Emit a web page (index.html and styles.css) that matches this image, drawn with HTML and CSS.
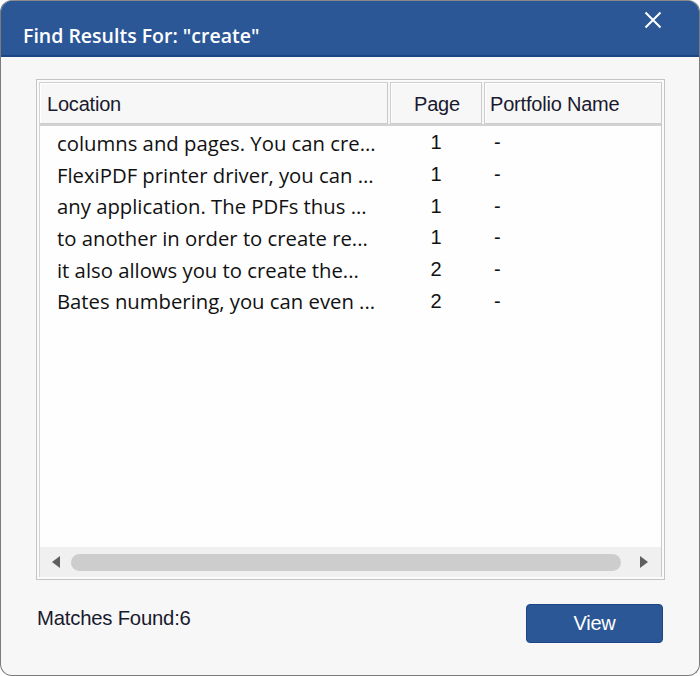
FILE: index.html
```html
<!DOCTYPE html>
<html>
<head>
<meta charset="utf-8">
<link rel="stylesheet" href="styles.css">
</head>
<body>
<div class="window">
  <div class="titlebar">
    <span class="title">Find Results For: "create"</span>
    <svg class="close" width="18" height="18" viewBox="0 0 18 18"><path d="M1.5 1.5L16.5 16.5M16.5 1.5L1.5 16.5" stroke="#fff" stroke-width="2" fill="none"/></svg>
  </div>
  <div class="content">
    <div class="list">
      <div class="grid">
        <div class="head">
          <div class="hcell c1">Location</div>
          <div class="hcell c2">Page</div>
          <div class="hcell c3">Portfolio Name</div>
        </div>
        <div class="rows">
          <div class="row"><span class="c1 loc">columns and pages. You can cre...</span><span class="c2 pg">1</span><span class="c3 pf">-</span></div>
          <div class="row"><span class="c1 loc">FlexiPDF printer driver, you can ...</span><span class="c2 pg">1</span><span class="c3 pf">-</span></div>
          <div class="row"><span class="c1 loc">any application. The PDFs thus ...</span><span class="c2 pg">1</span><span class="c3 pf">-</span></div>
          <div class="row"><span class="c1 loc">to another in order to create re...</span><span class="c2 pg">1</span><span class="c3 pf">-</span></div>
          <div class="row"><span class="c1 loc">it also allows you to create the...</span><span class="c2 pg">2</span><span class="c3 pf">-</span></div>
          <div class="row"><span class="c1 loc">Bates numbering, you can even ...</span><span class="c2 pg">2</span><span class="c3 pf">-</span></div>
        </div>
        <div class="hscroll">
          <span class="arrow left"></span>
          <span class="thumb"></span>
          <span class="arrow right"></span>
        </div>
      </div>
    </div>
    <div class="footer">
      <span class="matches">Matches Found:6</span>
      <button class="view">View</button>
    </div>
  </div>
</div>
</body>
</html>
```
FILE: styles.css
```css
html, body {
  margin: 0;
  padding: 0;
  background: #ffffff;
}
.window {
  width: 700px;
  height: 676px;
  box-sizing: border-box;
  border: 1px solid #7c7c7c;
  border-top-color: #8a8a8a;
  border-radius: 12px;
  overflow: hidden;
  background: #f7f7f7;
  display: flex;
  flex-direction: column;
}
.titlebar {
  height: 56px;
  flex: none;
  box-sizing: border-box;
  background: #2b5797;
  border-top: 1px solid #2b5797;
  border-bottom: 2px solid #1d4584;
  display: flex;
  align-items: center;
  justify-content: space-between;
  padding: 0 37px 0 22px;
}
.title {
  color: #fff;
  font-family: "Open Sans", "Noto Sans", sans-serif;
  font-weight: 600;
  font-size: 19.5px;
  margin-top: 14px;
}
.close {
  margin-top: -17px;
}
.content {
  padding: 22px 34px 0 35px;
}
.list {
  height: 501px;
  box-sizing: border-box;
  border: 1px solid #c4c4c4;
  padding: 2px;
  background: #fbfbfb;
}
.grid {
  height: 100%;
  box-sizing: border-box;
  border-left: 1px solid #d4d4d4;
  border-right: 1px solid #c9c9c9;
  background: #fefefe;
  display: flex;
  flex-direction: column;
}
.head {
  display: flex;
  height: 44px;
  flex: none;
  background: #f7f7f7;
  border-bottom: 2px solid #d2d2d2;
  box-sizing: border-box;
}
.hcell {
  box-sizing: border-box;
  border: 1px solid #cdcdcd;
  border-left: none;
  box-shadow: inset 1px 1px 0 #ffffff;
  display: flex;
  align-items: center;
  font-family: "Liberation Sans", Arial, sans-serif;
  font-size: 20px;
  color: #1a1a2e;
  letter-spacing: -0.2px;
  padding-top: 2px;
}
.head .c1 { width: 348px; padding-left: 7px; border-right: 1px solid #c8c8c8; margin-right: 2px; }
.head .c2 { width: 92px; justify-content: center; margin-right: 2px; border-left: 1px solid #cdcdcd; padding-left: 2px; }
.head .c3 { flex: 1; padding-left: 5px; border-left: 1px solid #cdcdcd; border-right: none; }
.rows {
  flex: 1;
  padding-top: 1px;
}
.row {
  display: flex;
  height: 31.7px;
  align-items: center;
  font-family: "Open Sans", "Noto Sans", sans-serif;
  font-size: 20.3px;
  color: #111;
}
.row .c1 { width: 350px; padding-left: 17px; box-sizing: border-box; white-space: nowrap; }
.row .c2 { width: 92px; text-align: center; font-family: "Liberation Sans", Arial, sans-serif; font-size: 20px; }
.row .c3 { padding-left: 12px; font-family: "Liberation Sans", Arial, sans-serif; font-size: 20px; }
.hscroll {
  flex: none;
  height: 30px;
  background: #f0f0f0;
  display: flex;
  align-items: center;
  padding: 0 13px 0 12px;
  margin-bottom: 0;
}
.arrow {
  width: 0;
  height: 0;
  border-top: 6px solid transparent;
  border-bottom: 6px solid transparent;
}
.arrow.left { border-right: 8px solid #5f5f5f; }
.arrow.right { border-left: 8px solid #5f5f5f; }
.thumb {
  height: 17px;
  border-radius: 9px;
  background: #cdcdcd;
  margin: 0 19px 0 11px;
  flex: 1;
}
.footer {
  display: flex;
  justify-content: space-between;
  align-items: center;
  padding: 24px 0 0 1px;
}
.matches {
  font-family: "Liberation Sans", Arial, sans-serif;
  font-size: 20.3px;
  color: #1a1a2e;
  letter-spacing: -0.2px;
  margin-top: -10px;
}
.view {
  width: 137px;
  height: 39px;
  background: #2b5797;
  border: 1px solid #1d4584;
  border-radius: 4px;
  color: #fff;
  font-family: "Liberation Sans", Arial, sans-serif;
  font-size: 20px;
  letter-spacing: -0.3px;
  padding: 0;
  margin-right: 2px;
}
```
